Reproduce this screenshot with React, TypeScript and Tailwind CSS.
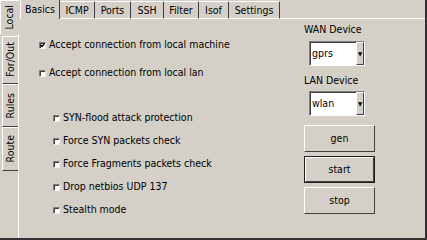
import React from "react";

const topTabs = [
  { label: "Basics", w: "w-[40px]", active: true },
  { label: "ICMP", w: "w-[35px]" },
  { label: "Ports", w: "w-[36px]" },
  { label: "SSH", w: "w-[33px]" },
  { label: "Filter", w: "w-[35px]" },
  { label: "Isof", w: "w-[30px]" },
  { label: "Settings", w: "w-[51px]" },
];

function Check({ checked }: { checked?: boolean }) {
  return (
    <span className="relative inline-block w-[7px] h-[7px] shrink-0 bg-white border-t border-l border-[#808080] border-b border-r border-b-[#f0f0f0] border-r-[#f0f0f0] shadow-[inset_1px_1px_0_#404040]">
      {checked && (
        <svg className="absolute left-0 top-0" width="5" height="5" viewBox="0 0 5 5">
          <path d="M0.5 2 L2 3.5 L4.5 0.5" stroke="#000" strokeWidth="1.2" fill="none" />
        </svg>
      )}
    </span>
  );
}

function Option({ label, checked, sub }: { label: string; checked?: boolean; sub?: boolean }) {
  return (
    <div className={`flex items-center gap-[3px] h-[14px] ${sub ? "pl-[34px]" : "pl-[20px]"}`}>
      <Check checked={checked} />
      <span>{label}</span>
    </div>
  );
}

function Combo({ value }: { value: string }) {
  return (
    <div className="ml-[5px] w-[56px] h-[25px] flex bg-white border-t border-l border-[#808080] border-b border-r border-b-white border-r-white">
      <div className="flex-1 flex items-center pl-[1px] border-t border-l border-[#404040]">{value}</div>
      <div className="w-[8px] flex items-center justify-center bg-[#d4d0c8] border-l border-white border-t border-t-white border-r border-r-[#404040] border-b border-b-[#404040] text-[6px] leading-none">
        ▼
      </div>
    </div>
  );
}

function Btn({ label, def }: { label: string; def?: boolean }) {
  return (
    <div className={`w-[71px] ${def ? "h-[27px] border border-[#202020]" : "h-[27px]"}`}>
      <div className="w-full h-full flex items-center justify-center border-t border-l border-white border-b border-r border-b-[#404040] border-r-[#404040]">
        {label}
      </div>
    </div>
  );
}

export default function App() {
  return (
    <div
      className="w-[427px] h-[240px] bg-[#d4d0c8] flex text-[10.5px] text-black border-r-2 border-b-2 border-[#303030] overflow-hidden"
      style={{ fontFamily: '"DejaVu Sans Condensed", "DejaVu Sans", sans-serif' }}
    >
      {/* side tabs */}
      <div className="w-[19px] flex flex-col shrink-0">
        <div className="h-[34px] flex items-center justify-center border-l border-t border-white">
          <span className="[writing-mode:vertical-rl] rotate-180">Local</span>
        </div>
        <div className="flex-1 flex flex-col border-r border-white">
          <div className="h-[48px] ml-[2px] mt-[2px] flex items-center justify-center border-l border-t border-white border-b border-b-[#404040]">
            <span className="[writing-mode:vertical-rl] rotate-180">For/Out</span>
          </div>
          <div className="h-[43px] ml-[2px] flex items-center justify-center border-l border-t border-white border-b border-b-[#404040]">
            <span className="[writing-mode:vertical-rl] rotate-180">Rules</span>
          </div>
          <div className="h-[44px] ml-[2px] flex items-center justify-center border-l border-t border-white border-b border-b-[#404040]">
            <span className="[writing-mode:vertical-rl] rotate-180">Route</span>
          </div>
        </div>
      </div>

      {/* main pane */}
      <div className="flex-1 flex flex-col">
        <div className="h-[19px] flex items-end pl-[1px] shrink-0">
          {topTabs.map((t) =>
            t.active ? (
              <div key={t.label} className={`${t.w} h-[19px] pt-[1px] flex items-center justify-center border-l border-white border-r border-r-[#404040]`}>
                {t.label}
              </div>
            ) : (
              <div key={t.label} className={`${t.w} h-[18px] pt-[1px] flex items-center justify-center border-t border-white border-r border-r-[#404040] border-b border-b-white`}>
                {t.label}
              </div>
            )
          )}
          <div className="flex-1 border-b border-white" />
        </div>

        <div className="flex-1 flex">
          <div className="flex-1 flex flex-col pt-[19px]">
            <Option label="Accept connection from local machine" checked />
            <div className="h-[14px]" />
            <Option label="Accept connection from local lan" />
            <div className="h-[31px]" />
            <div className="flex flex-col gap-[9px]">
              <Option label="SYN-flood attack protection" sub />
              <Option label="Force SYN packets check" sub />
              <Option label="Force Fragments packets check" sub />
              <Option label="Drop netbios UDP 137" sub />
              <Option label="Stealth mode" sub />
            </div>
          </div>

          <div className="w-[121px] flex flex-col pt-[4px]">
            <div className="h-[14px] flex items-center">WAN Device</div>
            <div className="h-[4px]" />
            <Combo value="gprs" />
            <div className="h-[8px]" />
            <div className="h-[14px] flex items-center">LAN Device</div>
            <div className="h-[3px]" />
            <Combo value="wlan" />
            <div className="h-[9px]" />
            <div className="flex flex-col gap-[4px]">
              <Btn label="gen" />
              <Btn label="start" def />
              <Btn label="stop" />
            </div>
          </div>
        </div>
      </div>
    </div>
  );
}
